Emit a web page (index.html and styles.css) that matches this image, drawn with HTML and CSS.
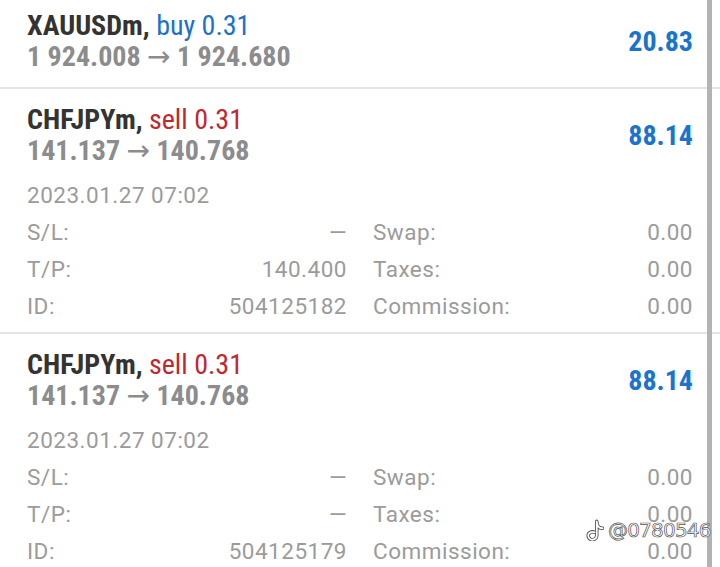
FILE: index.html
```html
<!DOCTYPE html>
<html lang="en">
<head>
    <meta charset="UTF-8">
    <meta name="viewport" content="width=device-width, initial-scale=1">
    <title>History</title>
    <link rel="stylesheet" href="styles.css">
</head>
<body>
    <div class="trades">
        <div class="trade">
            <div class="trade-head">
                <div class="trade-main">
                    <div class="symbol">XAUUSDm, <span class="buy">buy 0.31</span></div>
                    <div class="prices">1 924.008 <span class="arrow">&rarr;</span> 1 924.680</div>
                </div>
                <div class="profit">20.83</div>
            </div>
        </div>

        <div class="trade">
            <div class="trade-head">
                <div class="trade-main">
                    <div class="symbol">CHFJPYm, <span class="sell">sell 0.31</span></div>
                    <div class="prices">141.137 <span class="arrow">&rarr;</span> 140.768</div>
                </div>
                <div class="profit">88.14</div>
            </div>
            <div class="date">2023.01.27 07:02</div>
            <div class="details">
                <div class="cell"><span>S/L:</span><span>&mdash;</span></div>
                <div class="cell"><span>Swap:</span><span>0.00</span></div>
                <div class="cell"><span>T/P:</span><span>140.400</span></div>
                <div class="cell"><span>Taxes:</span><span>0.00</span></div>
                <div class="cell"><span>ID:</span><span>504125182</span></div>
                <div class="cell"><span>Commission:</span><span>0.00</span></div>
            </div>
        </div>

        <div class="trade">
            <div class="trade-head">
                <div class="trade-main">
                    <div class="symbol">CHFJPYm, <span class="sell">sell 0.31</span></div>
                    <div class="prices">141.137 <span class="arrow">&rarr;</span> 140.768</div>
                </div>
                <div class="profit">88.14</div>
            </div>
            <div class="date">2023.01.27 07:02</div>
            <div class="details">
                <div class="cell"><span>S/L:</span><span>&mdash;</span></div>
                <div class="cell"><span>Swap:</span><span>0.00</span></div>
                <div class="cell"><span>T/P:</span><span>&mdash;</span></div>
                <div class="cell"><span>Taxes:</span><span>0.00</span></div>
                <div class="cell"><span>ID:</span><span>504125179</span></div>
                <div class="cell"><span>Commission:</span><span>0.00</span></div>
            </div>
        </div>
    </div>

    <div class="scrollbar"></div>

    <div class="watermark">
        <svg class="wm-logo" width="18" height="22" viewBox="2 1 15 19">
            <path d="M11 3 C11 7 13 9 16 9 M11 3 L11 15 C11 18.5 7.5 19.5 5.5 18.5 C3 17 3 13.5 5.5 12.5 C6.5 12 8 12 9 12.5" fill="none" stroke="#444" stroke-width="3" stroke-linecap="round"/>
            <path d="M11 3 C11 7 13 9 16 9 M11 3 L11 15 C11 18.5 7.5 19.5 5.5 18.5 C3 17 3 13.5 5.5 12.5 C6.5 12 8 12 9 12.5" fill="none" stroke="#fff" stroke-width="1.6" stroke-linecap="round"/>
        </svg>
        <span>@0780546</span>
    </div>
</body>
</html>
```

FILE: styles.css
```css
body {
    margin: 0;
    background: #fff;
    font-family: Roboto, "Noto Sans", Arial, sans-serif;
    overflow: hidden;
    height: 567px;
    position: relative;
}

/* list is scrolled a few pixels */
.trades {
    margin-top: -5px;
}

.trade {
    padding: 15px 27px 7px 27px;
    border-bottom: 2px solid #e4e4e4;
}

.trade:first-child {
    padding-bottom: 15px;
}

.trade-head {
    display: flex;
    align-items: center;
    justify-content: space-between;
}

.symbol, .prices, .profit {
    font-family: "Roboto Condensed", "Liberation Sans Narrow", Roboto, sans-serif;
    font-weight: bold;
    font-size: 28px;
    line-height: 31px;
}

.symbol {
    color: #333;
}

.buy {
    color: #1a73c6;
    font-weight: normal;
}

.sell {
    color: #c1272d;
    font-weight: normal;
}

.prices {
    color: #8c8c8e;
}

.arrow {
    font-family: "DejaVu Sans", sans-serif;
    font-weight: normal;
    font-size: 28px;
    color: #8c8c8e;
}

.profit {
    color: #1a74cc;
}

.date {
    margin-top: 11px;
    font-size: 22.5px;
    letter-spacing: 0.5px;
    line-height: 37px;
    color: #9b9b9b;
}

.details {
    display: grid;
    grid-template-columns: 1fr 1fr;
    column-gap: 26px;
    font-size: 22.5px;
    letter-spacing: 0.5px;
    line-height: 37px;
    color: #9b9b9b;
}

.cell {
    display: flex;
    justify-content: space-between;
}

.scrollbar {
    position: absolute;
    top: 0;
    bottom: 0;
    left: 707px;
    width: 5px;
    background: #b3b3b3;
}

.watermark {
    position: absolute;
    left: 586px;
    top: 518px;
    display: flex;
    align-items: center;
    gap: 4px;
    font-family: "DejaVu Sans", sans-serif;
    font-size: 20px;
    color: #fff;
    -webkit-text-stroke: 0.7px #555;
    letter-spacing: -0.8px;
}
```
